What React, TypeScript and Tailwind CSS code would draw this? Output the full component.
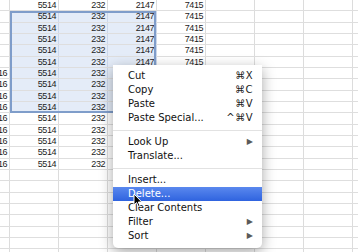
import { ReactNode } from 'react'

const ROW_HEIGHTS = Array.from({ length: 23 }, (_, i) => (i % 3 === 1 ? 'h-[12px]' : 'h-[11px]'))

type Row = { a?: string; b?: string; c?: string; d?: string; e?: string }

// rows under the menu keep only what shows around it
const rows: Row[] = ROW_HEIGHTS.map((_, i) => {
  if (i > 14) return {}
  if (i >= 6) return { a: '16', b: '5514', c: '232' }
  return { b: '5514', c: '232', d: '2147', e: '7415' }
})

function Cell({ w, text, selected }: { w: string; text?: string; selected?: boolean }) {
  return (
    <div
      className={`${w} h-full shrink-0 border-r overflow-hidden flex items-center justify-end pr-[2px] ${
        selected ? 'bg-[#e4ecf8] border-[#cbd7ea]' : 'border-[#dcdcdc]'
      }`}
    >
      <span className="whitespace-nowrap leading-none text-[9px] tracking-[-0.45px] text-[#1c1c1c]">{text}</span>
    </div>
  )
}

function MenuItem({
  label,
  shortcut,
  submenu,
  active,
}: {
  label: string
  shortcut?: string
  submenu?: boolean
  active?: boolean
}) {
  return (
    <div
      className={`h-[14px] flex items-center justify-between pl-[15px] pr-[9px] ${
        active ? 'bg-gradient-to-b from-[#5a88ee] to-[#2f63df] text-white' : 'text-[#111]'
      }`}
    >
      <span className="leading-none">{label}</span>
      {shortcut && <span className="leading-none text-[#222] tracking-[0.5px]">{shortcut}</span>}
      {submenu && <span className="text-[8px] leading-none text-[#5a5a5a]">▶</span>}
    </div>
  )
}

function Separator() {
  return (
    <div className="h-[10px] flex items-center">
      <div className="w-full h-px bg-[#e2e2e2]" />
    </div>
  )
}

function Cursor(): ReactNode {
  return (
    <svg className="absolute left-[133px] top-[193px]" width="10" height="15" viewBox="0 0 10 15">
      <path d="M1 1 L1 12 L3.6 9.6 L5.4 13.6 L7 12.9 L5.3 9 L8.8 9 Z" fill="#000" stroke="#fff" strokeWidth="1" strokeLinejoin="round" />
    </svg>
  )
}

export default function App() {
  return (
    <div className="relative w-[358px] h-[252px] overflow-hidden bg-white" style={{ fontFamily: '"Liberation Sans", Arial, sans-serif' }}>
      {/* sheet grid */}
      <div className="flex flex-col">
        {rows.map((r, i) => {
          const sel = i >= 1 && i <= 9
          return (
            <div key={i} className={`${ROW_HEIGHTS[i]} flex border-b border-[#dedede] box-border`}>
              <Cell w="w-[10px]" text={r.a} />
              <Cell w="w-[49px]" text={r.b} selected={sel} />
              <Cell w="w-[49px]" text={r.c} selected={sel} />
              <Cell w="w-[49px]" text={r.d} selected={sel} />
              <Cell w="w-[49px]" text={r.e} />
              <Cell w="w-[49px]" />
              <Cell w="w-[49px]" />
              <Cell w="w-[49px]" />
              <Cell w="w-[49px]" />
            </div>
          )
        })}
      </div>

      {/* selection outline */}
      <div className="absolute left-[10px] top-[11px] w-[146px] h-[102px] border-2 border-[#7f9dca] pointer-events-none" />

      {/* context menu */}
      <div
        className="absolute left-[113px] top-[65px] w-[149px] pt-[4px] pb-[5px] bg-white rounded-b-[5px] shadow-[0_4px_14px_rgba(0,0,0,0.35)] text-[10px]"
        style={{ fontFamily: '"DejaVu Sans", "Liberation Sans", sans-serif' }}
      >
        <MenuItem label="Cut" shortcut="⌘X" />
        <MenuItem label="Copy" shortcut="⌘C" />
        <MenuItem label="Paste" shortcut="⌘V" />
        <MenuItem label="Paste Special..." shortcut="^⌘V" />
        <Separator />
        <MenuItem label="Look Up" submenu />
        <MenuItem label="Translate..." />
        <Separator />
        <MenuItem label="Insert..." />
        <MenuItem label="Delete..." active />
        <MenuItem label="Clear Contents" />
        <MenuItem label="Filter" submenu />
        <MenuItem label="Sort" submenu />
      </div>

      <Cursor />
    </div>
  )
}
